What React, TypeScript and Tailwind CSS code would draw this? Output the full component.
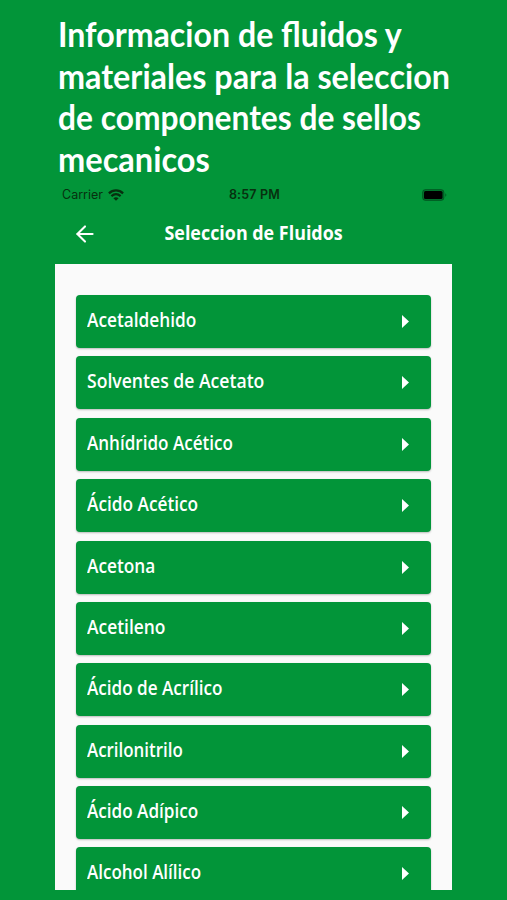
import { ArrowLeft } from 'lucide-react';

const headline = [
  { text: 'Informacion de fluidos y', scale: 'scale-x-[0.945]' },
  { text: 'materiales para la seleccion', scale: 'scale-x-[0.95]' },
  { text: 'de componentes de sellos', scale: 'scale-x-[0.933]' },
  { text: 'mecanicos', scale: 'scale-x-[0.957]' },
];

const fluids = [
  { name: 'Acetaldehido', scale: 'scale-x-[0.862]' },
  { name: 'Solventes de Acetato', scale: 'scale-x-[0.88]' },
  { name: 'Anhídrido Acético', scale: 'scale-x-[0.853]' },
  { name: 'Ácido Acético', scale: 'scale-x-[0.862]' },
  { name: 'Acetona', scale: 'scale-x-[0.862]' },
  { name: 'Acetileno', scale: 'scale-x-[0.87]' },
  { name: 'Ácido de Acrílico', scale: 'scale-x-[0.855]' },
  { name: 'Acrilonitrilo', scale: 'scale-x-[0.845]' },
  { name: 'Ácido Adípico', scale: 'scale-x-[0.855]' },
  { name: 'Alcohol Alílico', scale: 'scale-x-[0.85]' },
];

function WifiIcon() {
  return (
    <svg width="16" height="12" viewBox="0 0 16 12" fill="none" stroke="currentColor" strokeWidth="2.2">
      <path d="M0.9 4.4C5 0.4 11 0.4 15.1 4.4" />
      <path d="M3.4 7.1C6.2 4.6 9.8 4.6 12.6 7.1" />
      <path d="M5.4 9.2C7 7.8 9 7.8 10.6 9.2L8 11.8Z" fill="currentColor" stroke="none" />
    </svg>
  );
}

function BatteryIcon() {
  return (
    <svg width="25" height="12" viewBox="0 0 25 12">
      <rect x="0.5" y="0.5" width="21.5" height="11" rx="3" fill="#000" fillOpacity="0.25" stroke="#000" strokeOpacity="0.25" />
      <rect x="2" y="2" width="18.5" height="8" rx="1.5" fill="#000" />
      <path d="M23.3 4.2C24.7 4.8 24.7 7.2 23.3 7.8Z" fill="#000" fillOpacity="0.4" />
    </svg>
  );
}

function StatusBar() {
  return (
    <div className="grid h-4 grid-cols-3 items-center pl-[7px] pr-[5px] font-['Inter'] text-[12.5px] leading-4 text-[#07300f]">
      <div className="flex items-center gap-[5px]">
        <span>Carrier</span>
        <WifiIcon />
      </div>
      <span className="text-center text-[12.5px] font-semibold tracking-[0.2px]">8:57 PM</span>
      <div className="flex justify-end pb-px">
        <BatteryIcon />
      </div>
    </div>
  );
}

export default function App() {
  return (
    <div className="flex h-[900px] w-[507px] flex-col overflow-hidden bg-[#029539] px-[55px] pb-[10px] pt-[13px]">
      <h1 className="h-[174px] shrink-0 pl-[3px] font-['Lato'] text-[34px] font-bold leading-[41.7px] text-white">
        {headline.map((line) => (
          <span key={line.text} className={`block w-max origin-left ${line.scale}`}>
            {line.text}
          </span>
        ))}
      </h1>

      <StatusBar />

      <header className="grid h-[61px] shrink-0 grid-cols-[60px_1fr_60px] items-center text-white">
        <button type="button" aria-label="Volver" className="flex justify-center">
          <ArrowLeft size={26} strokeWidth={1.9} />
        </button>
        <h2 className="pb-px text-center font-['Open_Sans'] text-[20px] font-bold leading-6">
          <span className="inline-block scale-x-[0.895] whitespace-nowrap">Seleccion de Fluidos</span>
        </h2>
      </header>

      <main className="min-h-0 grow overflow-hidden bg-[#fafafa] px-[21px] pt-[31px]">
        <ul className="space-y-[8.38px]">
          {fluids.map((fluid) => (
            <li
              key={fluid.name}
              className="flex h-[53px] items-center justify-between rounded-[4px] bg-[#029539] pl-[11px] pr-[22px] text-white shadow-[0_1px_2px_rgba(0,0,0,0.25)]"
            >
              <span className={`w-max origin-left pb-[3px] font-['Open_Sans'] text-[20px] font-semibold leading-6 ${fluid.scale}`}>
                {fluid.name}
              </span>
              <svg width="7" height="13" viewBox="0 0 7 13" fill="currentColor">
                <path d="M0 0L7 6.5L0 13Z" />
              </svg>
            </li>
          ))}
        </ul>
      </main>
    </div>
  );
}
